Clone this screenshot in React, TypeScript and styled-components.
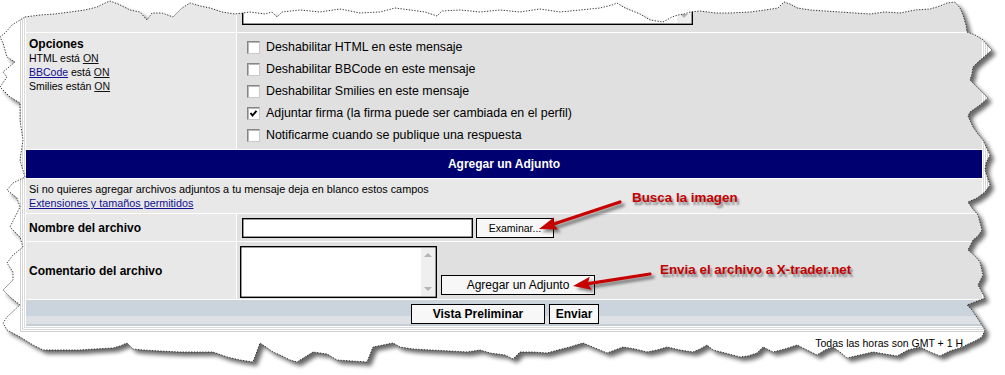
import React from "react";
import styled, { createGlobalStyle } from "styled-components";

const Global = createGlobalStyle`
  html, body { margin: 0; padding: 0; background: #fff; }
  body { font-family: "Liberation Sans", Arial, Helvetica, sans-serif; }
`;

const Page = styled.div`
  position: relative;
  width: 1005px;
  height: 375px;
  overflow: hidden;
  background: #fff;
  color: #000;
  font-family: "Liberation Sans", Arial, Helvetica, sans-serif;
`;

const Outer = styled.div`
  margin: -40px 0 0 20px;
  width: 968px;
  box-sizing: border-box;
  border: 1px solid #cfcfcf;
  padding: 1px;
  background: #fff;
`;

const Mid = styled.div`
  border: 1px solid #d6d6d6;
  padding: 1px;
  background: #fff;
`;

const Grid = styled.div`
  display: grid;
  grid-template-columns: 210px 1fr;
  grid-template-rows: 66px 116px 28px 34px 27px 57px 26px;
  gap: 1px;
  border: 1px solid #dcdcdc;
  padding: 1px;
  background: #fff;
`;

const Cell = styled.div<{ $tone?: "light" | "dark" }>`
  background: ${(p) => (p.$tone === "dark" ? "#e0e0e0" : "#e8e8e8")};
  box-sizing: border-box;
  min-width: 0;
`;

const TopRight = styled(Cell)`
  display: flex;
  align-items: flex-end;
  padding: 0 0 7px 5px;
`;

const LabelCell = styled(Cell)`
  display: flex;
  align-items: center;
  padding: 0 3px;
  font-size: 12px;
  font-weight: bold;
`;

const OptionsLeft = styled(Cell)`
  padding: 4px 3px;
`;

const Title = styled.div`
  font-size: 12px;
  font-weight: bold;
  line-height: 14px;
`;

const Small = styled.div<{ $size?: number }>`
  font-size: ${(p) => p.$size ?? 10.5}px;
  line-height: 14px;
`;

const Link = styled.a<{ $blue?: boolean }>`
  color: ${(p) => (p.$blue ? "#101090" : "#111")};
  text-decoration: underline;
  cursor: pointer;
`;

const OptionsRight = styled(Cell)`
  padding: 3px 0 0 10px;
  display: flex;
  flex-direction: column;
`;

const OptRow = styled.label`
  height: 22px;
  display: flex;
  align-items: center;
  gap: 6px;
  font-size: 12.4px;
  color: #000;
`;

const Box = styled.span`
  width: 13px;
  height: 13px;
  box-sizing: border-box;
  background: #fff;
  border: 1px solid;
  border-color: #858585 #c9c9c9 #c9c9c9 #858585;
  box-shadow: inset 1px 1px 0 #b8b8b8;
  display: flex;
  align-items: center;
  justify-content: center;
  flex: none;
`;

const Header = styled.div`
  grid-column: 1 / -1;
  background: #000070;
  color: #fff;
  font-size: 12px;
  font-weight: bold;
  display: flex;
  align-items: center;
  justify-content: center;
`;

const Info = styled(Cell)`
  grid-column: 1 / -1;
  padding: 3px 3px;
`;

const InputRow = styled(Cell)`
  display: flex;
  align-items: center;
  gap: 3px;
  padding-left: 5px;
`;

const CommentRow = styled(Cell)`
  display: flex;
  align-items: flex-start;
  gap: 4px;
  padding: 4px 0 0 3px;
`;

const Field = styled.div<{ $w: number; $h: number }>`
  width: ${(p) => p.$w}px;
  height: ${(p) => p.$h}px;
  box-sizing: border-box;
  border: 1px solid #000;
  box-shadow: inset 0 0 0 0.5px #333;
  background: #fff;
  display: flex;
  justify-content: flex-end;
  flex: none;
`;

const Scroll = styled.div`
  width: 14px;
  margin: 1px 1px 1px 0;
  background: #efefef;
  display: flex;
  flex-direction: column;
  justify-content: space-between;
  align-items: center;
  padding: 5px 0;
  box-sizing: border-box;
`;

const Arrow = styled.span<{ $up?: boolean }>`
  width: 0;
  height: 0;
  border-left: 4px solid transparent;
  border-right: 4px solid transparent;
  ${(p) =>
    p.$up
      ? "border-bottom: 4px solid #b4b4b4;"
      : "border-top: 4px solid #b4b4b4;"}
`;

const Button = styled.button<{ $w: number; $bold?: boolean }>`
  width: ${(p) => p.$w}px;
  height: 20px;
  box-sizing: border-box;
  border: 1px solid #000;
  background: #f7f7f7;
  padding: 0;
  font-family: "Liberation Sans", Arial, Helvetica, sans-serif;
  font-size: 12px;
  font-weight: ${(p) => (p.$bold ? "bold" : "normal")};
  color: #000;
  flex: none;
  cursor: pointer;
`;

const SmallButton = styled(Button)`
  font-size: 10.5px;
`;

const AddButton = styled(Button)`
  align-self: flex-end;
  margin-bottom: 4px;
`;

const BottomBar = styled.div`
  grid-column: 1 / -1;
  background: linear-gradient(
    #cbd3dc 0,
    #cbd3dc 16px,
    #dde0e4 16px,
    #dde0e4 24px,
    #c4ccd4 24px
  );
  display: flex;
  justify-content: center;
  align-items: flex-start;
  padding: 4px 0 0 2px;
  gap: 4px;
`;

const Footer = styled.div`
  margin-top: 5px;
  padding-right: 42px;
  text-align: right;
  font-size: 10.5px;
  line-height: 13px;
  color: #000;
`;

const Overlay = styled.svg`
  position: absolute;
  left: 0;
  top: 0;
  pointer-events: none;
`;

const Note = styled.div<{ $x: number; $y: number }>`
  position: absolute;
  left: ${(p) => p.$x}px;
  top: ${(p) => p.$y}px;
  font-size: 13.4px;
  line-height: 16px;
  font-weight: bold;
  color: #c40000;
  white-space: nowrap;
  text-shadow: 2px 3px 2px rgba(0, 0, 0, 0.4);
`;

const paperPts: [number, number][] = [
  [25, 17], [40, 15], [55, 14], [70, 12], [85, 10], [97, 7], [105, 3], [110, 1], [118, 4], [130, 10], [140, 12], [147, 20], [152, 13], [162, 13], [173, 17], [182, 8], [190, 3], [200, 6], [210, 8], [222, 12], [235, 14], [250, 12], [265, 14], [272, 12], [277, 17], [282, 12], [300, 10], [320, 12], [340, 9], [360, 13], [380, 12], [395, 8], [410, 10], [425, 12], [437, 16], [442, 11], [460, 10], [480, 12], [500, 10], [520, 12], [540, 9], [560, 12], [580, 10], [600, 8], [612, 5], [617, 3], [625, 8], [640, 14], [650, 20], [663, 22], [672, 17], [678, 15], [684, 14], [690, 12], [700, 11], [715, 13], [730, 13], [750, 12], [765, 10], [778, 8], [784, 2], [790, 4], [797, 8], [810, 10], [825, 11], [840, 12], [855, 13], [870, 14], [885, 12], [900, 13], [915, 10], [930, 9], [940, 6], [947, 3], [955, 2], [960, 8], [963, 15], [966, 25], [967, 32],
  [975, 35], [983, 40], [988, 46], [992, 50], [985, 56], [978, 62], [973, 67], [972, 74], [970, 80], [975, 85], [980, 90], [988, 98], [980, 105], [970, 112], [968, 116], [973, 127], [978, 134], [983, 140], [990, 155], [986, 163], [985, 170], [990, 185], [985, 192], [977, 198], [968, 202], [972, 208], [978, 215], [982, 230], [978, 236], [973, 240], [968, 250], [975, 256], [980, 262], [983, 275], [978, 285], [982, 292], [985, 298], [975, 302], [967, 305], [972, 310], [976, 316], [980, 322], [985, 330], [982, 337], [975, 341], [966, 345],
  [963, 347], [950, 351], [940, 356], [930, 352], [920, 347], [908, 350], [897, 356], [885, 354], [873, 352], [860, 355], [847, 358], [840, 352], [833, 347], [825, 350], [817, 355], [807, 350], [797, 345], [785, 349], [773, 352], [763, 347], [757, 353], [748, 356], [740, 357], [725, 353], [713, 350], [707, 345], [700, 349], [693, 352], [680, 350], [667, 347], [657, 350], [647, 352], [635, 349], [623, 347], [615, 350], [607, 353], [595, 348], [583, 343], [576, 345], [570, 347], [558, 350], [547, 353], [533, 352], [520, 352], [513, 359], [505, 355], [490, 353], [480, 350], [467, 352], [450, 351], [430, 350], [413, 349], [400, 347], [393, 343], [383, 345], [373, 347], [367, 362], [352, 361], [337, 360], [327, 354], [313, 352], [305, 357], [297, 362], [290, 360], [280, 355], [273, 352], [266, 347], [260, 343], [253, 362], [240, 360], [227, 357], [213, 352], [196, 352], [180, 352], [160, 351], [143, 350], [133, 349], [127, 343], [120, 346], [113, 348], [95, 349], [80, 350], [60, 350], [43, 350], [33, 345], [20, 337], [7, 330], [3, 323],
  [7, 317], [20, 305], [10, 297], [3, 290], [13, 280], [13, 272], [7, 263], [13, 255], [23, 247], [20, 237], [10, 227], [15, 217], [20, 207], [17, 198], [7, 190], [13, 183], [25, 177], [20, 160], [23, 140], [20, 120], [20, 103], [10, 97], [0, 87], [7, 77], [3, 72], [15, 62], [7, 57], [3, 43], [0, 37], [5, 33], [12, 25], [20, 20],
];

const paperPath = "M" + paperPts.map(([x, y]) => `${x} ${y}`).join(" L") + " Z";

type Arr = { tail: [number, number]; tip: [number, number] };

function arrowParts({ tail, tip }: Arr) {
  const dx = tip[0] - tail[0];
  const dy = tip[1] - tail[1];
  const len = Math.hypot(dx, dy);
  const ux = dx / len;
  const uy = dy / len;
  const hl = 18;
  const hw = 6.5;
  const bx = tip[0] - ux * hl;
  const by = tip[1] - uy * hl;
  const px = -uy * hw;
  const py = ux * hw;
  const head = `M${tip[0]} ${tip[1]} L${bx + px} ${by + py} L${bx + ux * 3} ${by + uy * 3} L${bx - px} ${by - py} Z`;
  const shaft = `M${tail[0]} ${tail[1]} L${bx + ux * 4} ${by + uy * 4}`;
  return { head, shaft };
}

const arrows: Arr[] = [
  { tail: [620, 202], tip: [539, 229] },
  { tail: [650, 274], tip: [573, 286] },
];

const Check = () => (
  <svg width="9" height="9" viewBox="0 0 9 9">
    <path d="M1.5 4 L3.5 6.5 L7.5 1.8" fill="none" stroke="#000" strokeWidth="1.9" />
  </svg>
);

const options: { label: string; checked?: boolean }[] = [
  { label: "Deshabilitar HTML en este mensaje" },
  { label: "Deshabilitar BBCode en este mensaje" },
  { label: "Deshabilitar Smilies en este mensaje" },
  { label: "Adjuntar firma (la firma puede ser cambiada en el perfil)", checked: true },
  { label: "Notificarme cuando se publique una respuesta" },
];

export default function App() {
  return (
    <Page>
      <Global />
      <Outer>
        <Mid>
          <Grid>
            <Cell $tone="light" />
            <TopRight $tone="dark">
              <Field $w={451} $h={52}>
                <Scroll>
                  <span />
                  <Arrow />
                </Scroll>
              </Field>
            </TopRight>

            <OptionsLeft $tone="light">
              <Title>Opciones</Title>
              <Small>
                HTML está <Link>ON</Link>
              </Small>
              <Small>
                <Link $blue>BBCode</Link> está <Link>ON</Link>
              </Small>
              <Small>
                Smilies están <Link>ON</Link>
              </Small>
            </OptionsLeft>
            <OptionsRight $tone="dark">
              {options.map((o) => (
                <OptRow key={o.label}>
                  <Box>{o.checked && <Check />}</Box>
                  {o.label}
                </OptRow>
              ))}
            </OptionsRight>

            <Header>Agregar un Adjunto</Header>

            <Info $tone="light">
              <Small $size={10.85}>
                Si no quieres agregar archivos adjuntos a tu mensaje deja en blanco estos campos
              </Small>
              <Small $size={10.8}>
                <Link $blue>Extensiones y tamaños permitidos</Link>
              </Small>
            </Info>

            <LabelCell $tone="light">Nombre del archivo</LabelCell>
            <InputRow $tone="dark">
              <Field $w={231} $h={20} />
              <SmallButton $w={78}>Examinar...</SmallButton>
            </InputRow>

            <LabelCell $tone="light">Comentario del archivo</LabelCell>
            <CommentRow $tone="dark">
              <Field $w={197} $h={52}>
                <Scroll>
                  <Arrow $up />
                  <Arrow />
                </Scroll>
              </Field>
              <AddButton $w={154}>Agregar un Adjunto</AddButton>
            </CommentRow>

            <BottomBar>
              <Button $w={134} $bold>
                Vista Preliminar
              </Button>
              <Button $w={50} $bold>
                Enviar
              </Button>
            </BottomBar>
          </Grid>
        </Mid>
      </Outer>
      <Footer>Todas las horas son GMT + 1 H</Footer>

      <Note $x={632} $y={190}>Busca la imagen</Note>
      <Note $x={660} $y={262}>Envia el archivo a X-trader.net</Note>

      <Overlay width="1005" height="375" viewBox="0 0 1005 375">
        <defs>
          <filter id="ablur" x="-20%" y="-50%" width="140%" height="200%">
            <feGaussianBlur stdDeviation="1.6" />
          </filter>
        </defs>
        {arrows.map((a, i) => {
          const { head, shaft } = arrowParts(a);
          return (
            <g key={i}>
              <g transform="translate(3 3)" filter="url(#ablur)" opacity="0.45">
                <path d={shaft} stroke="#000" strokeWidth="3.5" strokeLinecap="round" />
                <path d={head} fill="#000" />
              </g>
              <path d={shaft} stroke="#c80000" strokeWidth="3.2" strokeLinecap="round" />
              <path d={head} fill="#c80000" />
            </g>
          );
        })}
      </Overlay>

      <Overlay width="1005" height="375" viewBox="0 0 1005 375">
        <defs>
          <filter id="pblur" x="-5%" y="-5%" width="110%" height="110%">
            <feGaussianBlur stdDeviation="2.2" />
          </filter>
          <mask id="outside">
            <rect width="1005" height="375" fill="#fff" />
            <path d={paperPath} fill="#000" />
          </mask>
        </defs>
        <path d={`M0 0 H1005 V375 H0 Z ${paperPath}`} fill="#fff" fillRule="evenodd" />
        <g mask="url(#outside)">
          <path d={paperPath} transform="translate(4 4)" fill="#000" opacity="0.6" filter="url(#pblur)" />
        </g>
        <path d={paperPath} fill="none" stroke="#222" strokeWidth="0.9" strokeDasharray="1.3 1.5" />
      </Overlay>
    </Page>
  );
}
